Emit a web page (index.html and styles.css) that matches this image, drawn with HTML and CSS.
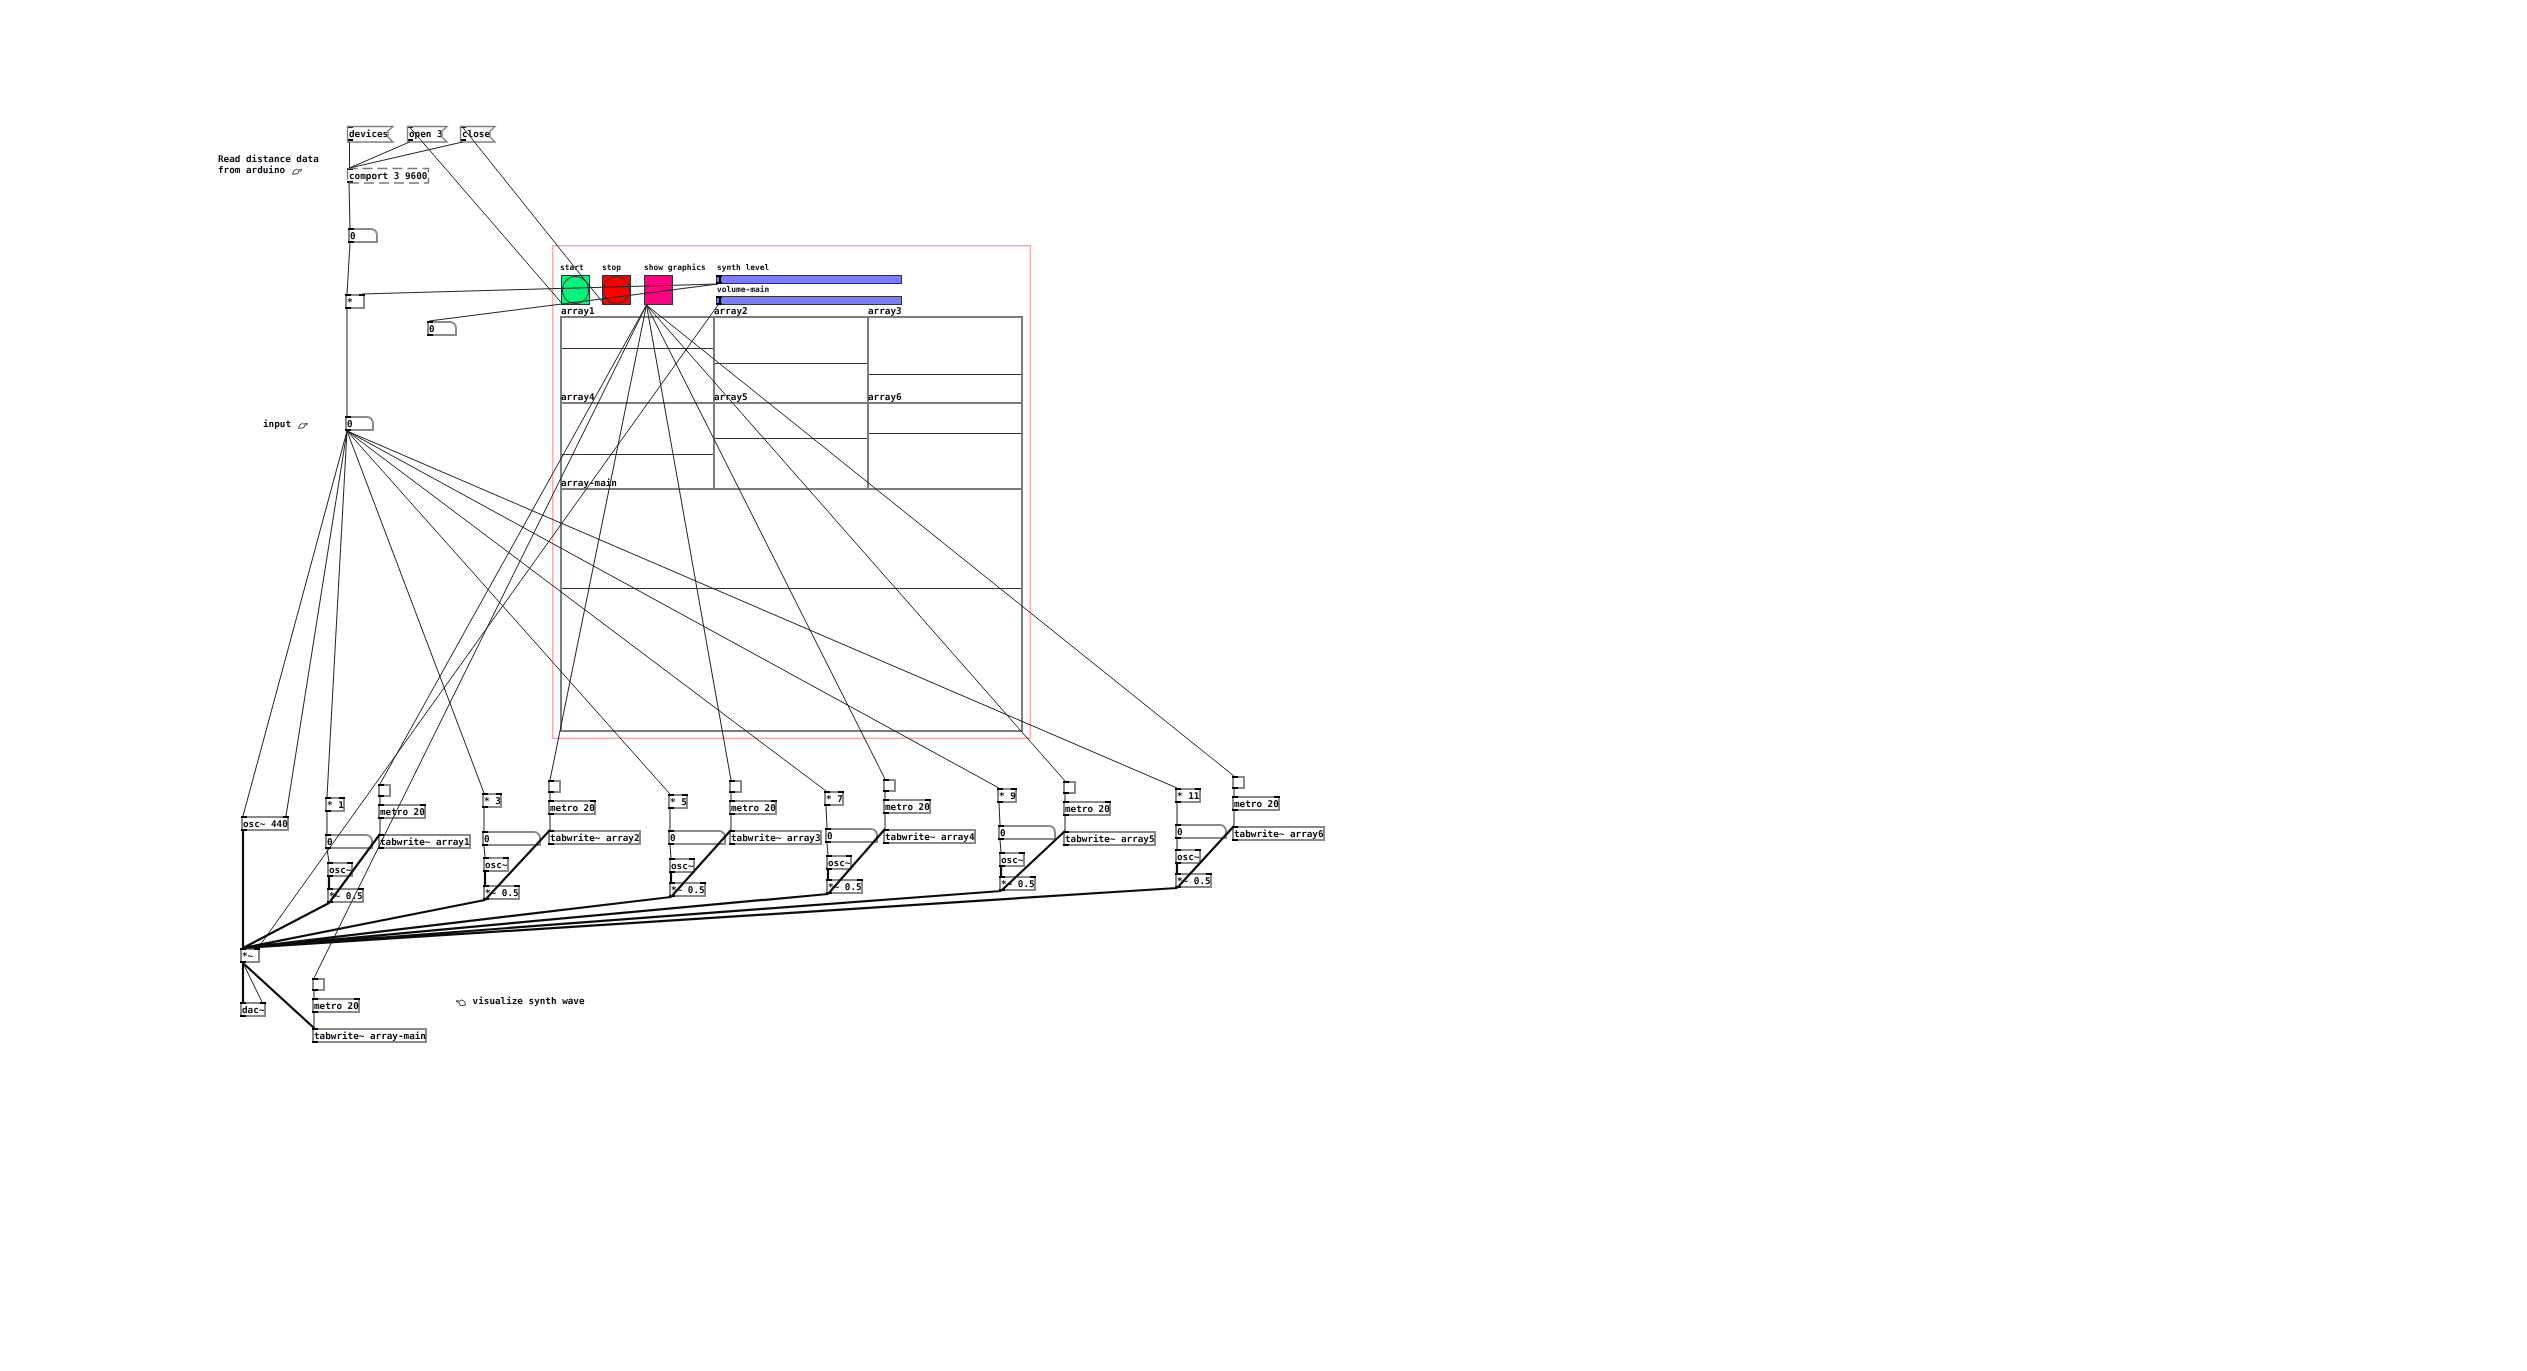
FILE: index.html
```html
<!DOCTYPE html>
<html lang="en">
<head>
<meta charset="utf-8">
<title>Pd patch</title>
<link rel="stylesheet" href="styles.css">
</head>
<body>
<main class="patch">
  <!-- comments -->
  <p class="cmt" style="left:218px;top:154px">Read distance data<br>from arduino <svg class="hand" viewBox="0 0 10 7"><path d="M0.6 6.4L1.6 3L4.6 1.2L5.6 2L9.6 1.4L9.2 2.8L6.6 3.2L6 5.6L1.4 6.4Z"/></svg></p>
  <p class="cmt" style="left:263px;top:419px">input <svg class="hand" viewBox="0 0 10 7"><path d="M0.6 6.4L1.6 3L4.6 1.2L5.6 2L9.6 1.4L9.2 2.8L6.6 3.2L6 5.6L1.4 6.4Z"/></svg></p>
  <p class="cmt" style="left:456px;top:996px"><svg class="hand flip" viewBox="0 0 10 7"><path d="M0.4 1.6L4 2.2L5 0.8L8.4 2.4L9.6 6.2L4 6.6L3.2 3.4L0.6 3Z"/></svg> visualize synth wave</p>

  <!-- GUI frame -->
  <div class="frame" style="left:552px;top:245px;width:479px;height:494px"></div>
  <p class="lbl" style="left:560px;top:263px">start</p>
  <p class="lbl" style="left:602px;top:263px">stop</p>
  <p class="lbl" style="left:644px;top:263px">show graphics</p>
  <p class="lbl" style="left:717px;top:263px">synth level</p>
  <p class="lbl" style="left:717px;top:285px">volume-main</p>
  <div class="bng start" style="left:561px;top:275px"><span class="disc"></span></div>
  <div class="bng stop" style="left:602px;top:275px"><span class="disc"></span></div>
  <div class="bng show" style="left:644px;top:275px"></div>
  <div class="hsl" style="left:716px;top:275px"><i></i></div>
  <div class="hsl" style="left:716px;top:296px"><i></i></div>

  <!-- arrays -->
  <div class="arr" style="left:560px;top:316px;width:155px;height:88px"><span class="wave" style="top:30px"></span></div>
  <div class="arr" style="left:713px;top:316px;width:156px;height:88px"><span class="wave" style="top:45px"></span></div>
  <div class="arr" style="left:867px;top:316px;width:156px;height:88px"><span class="wave" style="top:56px"></span></div>
  <div class="arr" style="left:560px;top:402px;width:155px;height:88px"><span class="wave" style="top:50px"></span></div>
  <div class="arr" style="left:713px;top:402px;width:156px;height:88px"><span class="wave" style="top:34px"></span></div>
  <div class="arr" style="left:867px;top:402px;width:156px;height:88px"><span class="wave" style="top:29px"></span></div>
  <div class="arr" style="left:560px;top:488px;width:463px;height:244px"><span class="wave" style="top:98px"></span></div>
  <p class="alb" style="left:561px;top:305px">array1</p>
  <p class="alb" style="left:714px;top:305px">array2</p>
  <p class="alb" style="left:868px;top:305px">array3</p>
  <p class="alb" style="left:561px;top:391px">array4</p>
  <p class="alb" style="left:714px;top:391px">array5</p>
  <p class="alb" style="left:868px;top:391px">array6</p>
  <p class="alb" style="left:561px;top:477px">array-main</p>

  <!-- messages -->
  <div class="obj msg" style="left:347px;top:126px;width:46px">devices</div>
  <div class="obj msg" style="left:407px;top:126px;width:40px">open 3</div>
  <div class="obj msg" style="left:460px;top:126px;width:35px">close</div>

  <!-- top chain -->
  <div class="obj dash" style="left:347px;top:168px;width:82px">comport 3 9600</div>
  <div class="obj num" style="left:348px;top:228px;width:30px">0</div>
  <div class="obj" style="left:345px;top:294px;width:20px">*<b></b></div>
  <div class="obj num" style="left:427px;top:321px;width:30px">0</div>
  <div class="obj num" style="left:345px;top:416px;width:29px">0</div>

  <!-- main out -->
  <div class="obj" style="left:241px;top:816px;width:48px">osc~ 440<b></b></div>
  <div class="obj" style="left:240px;top:948px;width:20px">*~<b></b></div>
  <div class="obj" style="left:240px;top:1002px;width:26px">dac~<b></b></div>
  <div class="bang" style="left:312px;top:978px"></div>
  <div class="obj" style="left:312px;top:998px;width:48px">metro 20<b></b></div>
  <div class="obj" style="left:312px;top:1028px;width:115px">tabwrite~ array-main</div>

  <!-- voice 1 -->
  <div class="obj" style="left:325px;top:797px;width:20px">* 1<b></b></div>
  <div class="obj num" style="left:325px;top:834px;width:48px">0</div>
  <div class="obj" style="left:327px;top:862px;width:26px">osc~<b></b></div>
  <div class="obj" style="left:327px;top:888px;width:37px">*~ 0.5<b></b></div>
  <div class="bang" style="left:378px;top:784px"></div>
  <div class="obj" style="left:378px;top:804px;width:48px">metro 20<b></b></div>
  <div class="obj" style="left:378px;top:834px;width:93px">tabwrite~ array1</div>

  <!-- voice 2 -->
  <div class="obj" style="left:482px;top:793px;width:20px">* 3<b></b></div>
  <div class="obj num" style="left:482px;top:831px;width:59px">0</div>
  <div class="obj" style="left:483px;top:857px;width:26px">osc~<b></b></div>
  <div class="obj" style="left:483px;top:885px;width:37px">*~ 0.5<b></b></div>
  <div class="bang" style="left:548px;top:780px"></div>
  <div class="obj" style="left:548px;top:800px;width:48px">metro 20<b></b></div>
  <div class="obj" style="left:548px;top:830px;width:93px">tabwrite~ array2</div>

  <!-- voice 3 -->
  <div class="obj" style="left:668px;top:794px;width:20px">* 5<b></b></div>
  <div class="obj num" style="left:668px;top:830px;width:58px">0</div>
  <div class="obj" style="left:669px;top:858px;width:26px">osc~<b></b></div>
  <div class="obj" style="left:669px;top:882px;width:37px">*~ 0.5<b></b></div>
  <div class="bang" style="left:729px;top:780px"></div>
  <div class="obj" style="left:729px;top:800px;width:48px">metro 20<b></b></div>
  <div class="obj" style="left:729px;top:830px;width:93px">tabwrite~ array3</div>

  <!-- voice 4 -->
  <div class="obj" style="left:824px;top:791px;width:20px">* 7<b></b></div>
  <div class="obj num" style="left:825px;top:828px;width:53px">0</div>
  <div class="obj" style="left:826px;top:855px;width:26px">osc~<b></b></div>
  <div class="obj" style="left:826px;top:879px;width:37px">*~ 0.5<b></b></div>
  <div class="bang" style="left:883px;top:779px"></div>
  <div class="obj" style="left:883px;top:799px;width:48px">metro 20<b></b></div>
  <div class="obj" style="left:883px;top:829px;width:93px">tabwrite~ array4</div>

  <!-- voice 5 -->
  <div class="obj" style="left:997px;top:788px;width:20px">* 9<b></b></div>
  <div class="obj num" style="left:998px;top:825px;width:58px">0</div>
  <div class="obj" style="left:999px;top:852px;width:26px">osc~<b></b></div>
  <div class="obj" style="left:999px;top:876px;width:37px">*~ 0.5<b></b></div>
  <div class="bang" style="left:1063px;top:781px"></div>
  <div class="obj" style="left:1063px;top:801px;width:48px">metro 20<b></b></div>
  <div class="obj" style="left:1063px;top:831px;width:93px">tabwrite~ array5</div>

  <!-- voice 6 -->
  <div class="obj" style="left:1175px;top:788px;width:26px">* 11<b></b></div>
  <div class="obj num" style="left:1175px;top:824px;width:52px">0</div>
  <div class="obj" style="left:1175px;top:849px;width:26px">osc~<b></b></div>
  <div class="obj" style="left:1175px;top:873px;width:37px">*~ 0.5<b></b></div>
  <div class="bang" style="left:1232px;top:776px"></div>
  <div class="obj" style="left:1232px;top:796px;width:48px">metro 20<b></b></div>
  <div class="obj" style="left:1232px;top:826px;width:93px">tabwrite~ array6</div>

  <svg class="wires" width="2527" height="1371" viewBox="0 0 2527 1371" aria-hidden="true">
    <path class="flag" d="M347.500 126.500H393L388 131V137L393 142H347.500Z M407.500 126.500H447L442 131V137L447 142H407.500Z M460.500 126.500H495L490 131V137L495 142H460.500Z"/>
    <rect class="dashbox" x="347.500" y="168.500" width="81" height="14.500"/>
    <path class="thin" d="M349.500 142L349.500 168 M409.500 142L349.500 168 M462.500 142L349.500 168 M349 183L350 228 M350 243L347 294 M347 309V416
      M562.500 304L409.500 127 M604 304L462.500 127 M362 294L718 284 M429 321L718 284 M718 305L258 948
      M646.500 305L314 978 M646.500 305L380 784 M646.500 305L550 780 M646.500 305L731 780 M646.500 305L885 779 M646.500 305L1065 781 M646.500 305L1234 776
      M347 431L243 816 M347 431L286 816 M347 431L327 797 M347 431L484 793 M347 431L670 794 M347 431L826 791 M347 431L999 788 M347 431L1177 788
      M327 812L327 834 M327 849L329 862 M380 797V804 M380 819V834
      M484 808L484 831 M484 846L485 857 M550 793V800 M550 815V830
      M670 809V830 M670 845L671 858 M731 793V800 M731 815V830
      M826 806L827 828 M827 843L828 855 M885 792V799 M885 814V829
      M999 803L1000 825 M1000 840L1001 852 M1065 794V801 M1065 816V831
      M1177 803V824 M1177 839V849 M1234 789V796 M1234 811V826
      M314 991V998 M314 1013V1028 M243 963L262 1002"/>
    <path class="thick" d="M243 831V948 M243 963V1002 M243 963L314 1028
      M329 877V888 M329 903L243 948 M329 903L380 834
      M485 872V885 M485 900L243 948 M485 900L550 830
      M671 873V882 M671 897L243 948 M671 897L731 830
      M828 870V879 M828 894L243 948 M828 894L885 829
      M1001 867V876 M1001 891L243 948 M1001 891L1065 831
      M1177 864V873 M1177 888L243 948 M1177 888L1234 826"/>
  </svg>
</main>
</body>
</html>
```
FILE: styles.css
```css
html, body {
  margin: 0;
  padding: 0;
  background: #fff;
}

.patch {
  position: relative;
  width: 2527px;
  height: 1371px;
  overflow: hidden;
  background: #fff;
  filter: blur(0.35px);
  font-family: "DejaVu Sans Mono", "Liberation Mono", monospace;
  font-weight: 700;
  font-size: 9.3px;
  color: #0a0a14;
  text-rendering: geometricPrecision;
}

.cmt, .lbl, .alb {
  position: absolute;
  margin: 0;
  white-space: nowrap;
}

.cmt {
  line-height: 11.4px;
}

.hand {
  display: inline-block;
  width: 10px;
  height: 7px;
  margin-left: 1px;
  vertical-align: -2px;
  fill: none;
  stroke: #333;
  stroke-width: 0.9;
}

.flip {
  margin: 0 1px 0 0;
}

.lbl {
  font-size: 7.9px;
  line-height: 10px;
}

.alb {
  line-height: 13px;
}

.frame {
  position: absolute;
  box-sizing: border-box;
  border: 1px solid #ffa8a8;
  box-shadow: inset 0 0 0 1px #ffd8d8;
}

.obj {
  position: absolute;
  box-sizing: border-box;
  height: 15px;
  padding-left: 0;
  border: 2px solid #8a8a8a;
  line-height: 13px;
  white-space: nowrap;
  background: #fff;
}

.obj::before, .obj::after, .obj > b,
.bang::before, .bang::after,
.hsl::before, .hsl::after {
  content: "";
  position: absolute;
  left: -2px;
  width: 6px;
  height: 2px;
  background: #000;
}

.obj::before, .bang::before, .hsl::before {
  top: -2px;
}

.obj::after, .bang::after, .hsl::after {
  bottom: -2px;
}

.obj > b {
  left: auto;
  right: -2px;
  top: -2px;
}

.msg, .dash {
  border: 0;
  background: none;
  padding-left: 2px;
  line-height: 17px;
}

.msg::before, .dash::before {
  left: 0;
  top: 0;
}

.msg::after, .dash::after {
  left: 0;
  bottom: 0;
}

.num {
  border-top-right-radius: 7px;
}

.bang {
  position: absolute;
  box-sizing: border-box;
  width: 13px;
  height: 13px;
  border: 2px solid #8a8a8a;
  background: #fff;
}

.bng {
  position: absolute;
  box-sizing: border-box;
  width: 29px;
  height: 30px;
  border: 1px solid #333;
}

.start { background: #00f47e; }
.stop { background: #ff0000; }
.show { background: #ff0080; }

.disc {
  display: block;
  box-sizing: border-box;
  width: 27px;
  height: 28px;
  border: 1px solid #333;
  border-radius: 50%;
}

.hsl {
  position: absolute;
  box-sizing: border-box;
  width: 186px;
  height: 9px;
  border: 1px solid #333;
  background: #7b7bff;
}

.hsl::before, .hsl::after {
  left: -1px;
  top: auto;
  bottom: auto;
}

.hsl::before {
  top: -1px;
}

.hsl::after {
  bottom: -1px;
}

.hsl > i {
  position: absolute;
  left: 2px;
  top: 0;
  width: 2px;
  height: 7px;
  background: #000;
}

.arr {
  position: absolute;
  box-sizing: border-box;
  border: 2px solid #7c7c7c;
}

.wave {
  position: absolute;
  left: 0;
  right: 0;
  height: 1px;
  background: #333;
}

.wires {
  position: absolute;
  left: 0;
  top: 0;
  pointer-events: none;
  fill: none;
}

.flag {
  stroke: #808080;
  stroke-width: 1.4;
}

.dashbox {
  stroke: #7a7a7a;
  stroke-width: 1.4;
  stroke-dasharray: 10 5;
}

.thin {
  stroke: #222;
  stroke-width: 1;
}

.thick {
  stroke: #0c0c0c;
  stroke-width: 2.2;
}
```
